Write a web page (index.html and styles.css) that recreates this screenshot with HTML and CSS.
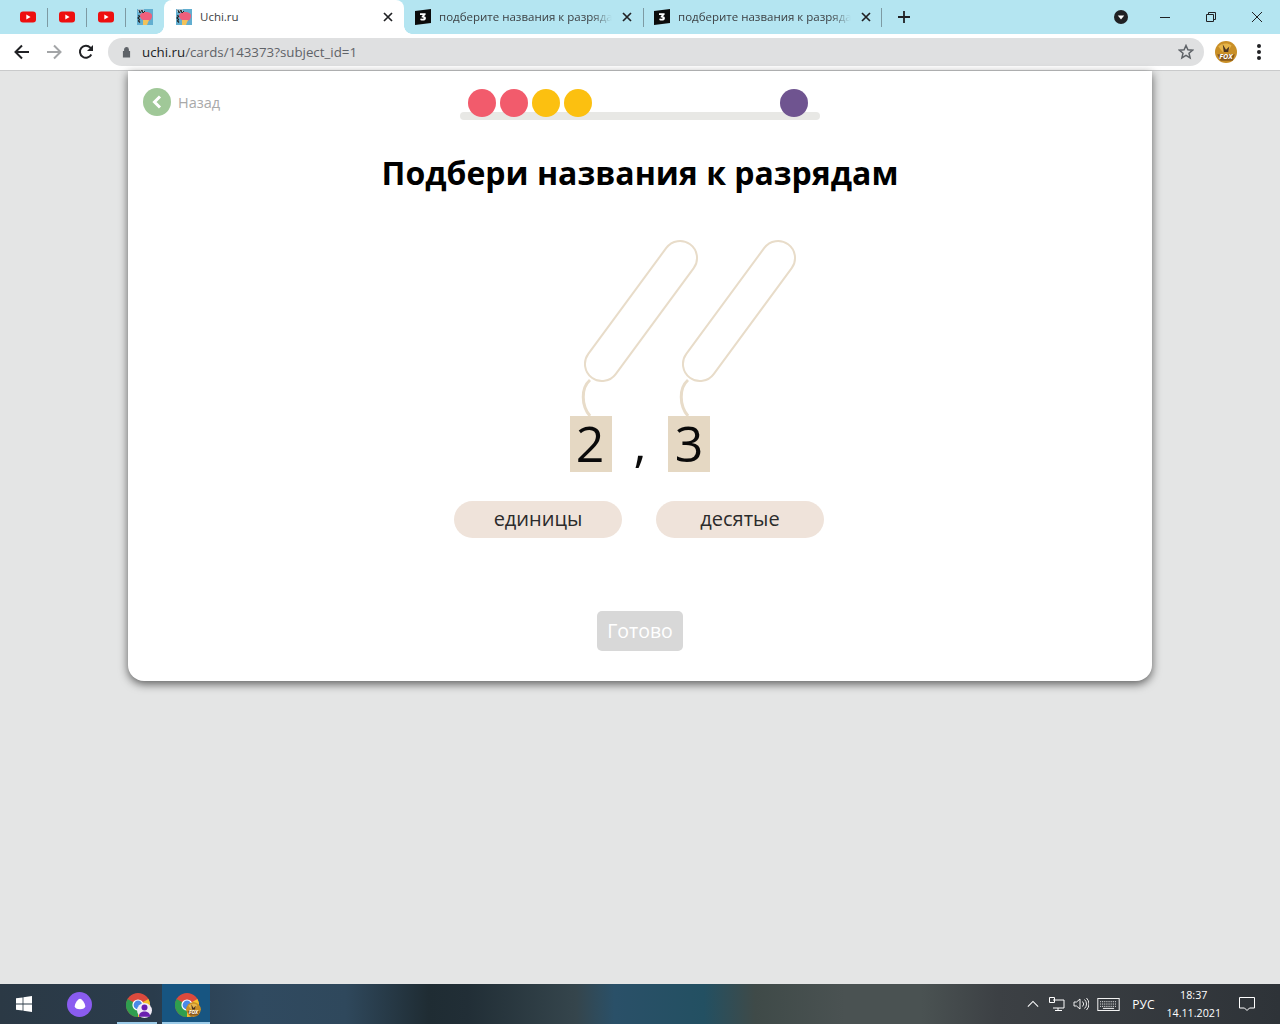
FILE: index.html
```html
<!DOCTYPE html>
<html lang="ru">
<head>
<meta charset="utf-8">
<title>Uchi.ru</title>
<link rel="stylesheet" href="styles.css">
</head>
<body>
<svg class="defs" width="0" height="0" aria-hidden="true">
  <defs>
    <symbol id="yt" viewBox="0 0 16 12"><rect width="16" height="11" y="0.5" rx="3" fill="#ee0f0f"/><path d="M6.3 3.6v4.8L10.6 6z" fill="#fff"/></symbol>
    <symbol id="uchi" viewBox="0 0 16 16"><rect width="16" height="16" fill="#62aed0"/><path d="M1 0h6v3H1z" fill="#a9c7d6"/><path d="M3 7c0-3 3-4 6-4s6 1 6 4c0 3-2 5-5 5S3 10 3 7z" fill="#ef5f7c"/><path d="M6 11h6l-2 5H6z" fill="#f3c25a"/><path d="M2 1l1 3 2-3 1 3 2-2" fill="none" stroke="#222" stroke-width="1"/><path d="M1.500 6l1 1.500-1.500 1.500 1.500 1.500-1 1.500 1.500 1.500" fill="none" stroke="#222" stroke-width="1.200"/></symbol>
    <symbol id="znanija" viewBox="0 0 16 16"><path d="M0 2l16-2v14L0 16z" fill="#0b0b0b"/><path d="M5 4.2h5.6v1.6L8.9 7.2c1.3.1 2 .9 2 2 0 1.500-1.200 2.400-2.900 2.400-1 0-2-.2-2.800-.7l.6-1.700c.6.400 1.300.6 1.900.6.600 0 1-.2 1-.7 0-.5-.4-.7-1.100-.7H6.700V7.100L8 5.900H5z" fill="#fff"/></symbol>
    <symbol id="close" viewBox="0 0 10 10"><path d="M1 1l8 8M9 1l-8 8" fill="none" stroke="#202124" stroke-width="1.700"/></symbol>
    <symbol id="chrome" viewBox="0 0 24 24"><circle cx="12" cy="12" r="12" fill="#dc4a3d"/><path d="M12 12L1.600 6A12 12 0 0 0 12 24z" fill="#2f9e4f"/><path d="M12 12v12A12 12 0 0 0 22.400 6z" fill="#f5c22c"/><circle cx="12" cy="12" r="5.600" fill="#fff"/><circle cx="12" cy="12" r="4.400" fill="#4a89e8"/></symbol>
    <symbol id="fox" viewBox="0 0 20 20"><circle cx="10" cy="10" r="10" fill="#c98f26"/><path d="M3 5c3-3 8-4 12-1l-3 5-5 1z" fill="#e6b54a"/><path d="M7 3l3 5 3-3-1 5H8z" fill="#4a3320"/><path d="M2 12h16l-2 6H5z" fill="#8a5a1c"/><text x="10" y="16.500" text-anchor="middle" font-family="Open Sans" font-size="6.500" font-weight="700" font-style="italic" fill="#fff">FOX</text></symbol>
  </defs>
</svg>

<header class="tabstrip">
  <div class="pinned">
    <div class="pin"><svg class="fav-yt"><use href="#yt"/></svg></div>
    <div class="pin"><svg class="fav-yt"><use href="#yt"/></svg></div>
    <div class="pin"><svg class="fav-yt"><use href="#yt"/></svg></div>
    <div class="pin pin-last"><svg class="fav"><use href="#uchi"/></svg></div>
  </div>
  <div class="tab tab-active">
    <svg class="fav"><use href="#uchi"/></svg>
    <span class="tab-title">Uchi.ru</span>
    <svg class="tab-x"><use href="#close"/></svg>
  </div>
  <div class="tab tab-rest">
    <svg class="fav"><use href="#znanija"/></svg>
    <span class="tab-title tab-fade">подберите названия к разрядам</span>
    <svg class="tab-x"><use href="#close"/></svg>
  </div>
  <div class="tab tab-rest tab-sep">
    <svg class="fav"><use href="#znanija"/></svg>
    <span class="tab-title tab-fade">подберите названия к разрядам</span>
    <svg class="tab-x"><use href="#close"/></svg>
  </div>
  <span class="strip-sep"></span>
  <svg class="new-tab" viewBox="0 0 12 12"><path d="M6 0v12M0 6h12" fill="none" stroke="#202124" stroke-width="1.800"/></svg>
  <div class="strip-right">
    <span class="tab-search"><svg viewBox="0 0 14 14"><circle cx="7" cy="7" r="7" fill="#202124"/><path d="M3.800 5.600h6.400L7 9.600z" fill="#fff"/></svg></span>
    <svg class="win-btn" viewBox="0 0 46 20"><path d="M18 10.500h10" stroke="#202124" fill="none"/></svg>
    <svg class="win-btn" viewBox="0 0 46 20"><path d="M18.500 7.500h7v7h-7zM20.500 7.500v-2h7v7h-2" stroke="#202124" fill="none"/></svg>
    <svg class="win-btn" viewBox="0 0 46 20"><path d="M18 5l10 10M28 5L18 15" stroke="#202124" fill="none"/></svg>
  </div>
</header>

<nav class="toolbar">
  <svg class="nav-icon" viewBox="0 0 16 16"><path d="M15 8H2M8 1.500L1.500 8 8 14.500" fill="none" stroke="#202124" stroke-width="2"/></svg>
  <svg class="nav-icon" viewBox="0 0 16 16"><path d="M1 8h13M8 1.500L14.500 8 8 14.500" fill="none" stroke="#a3a5a7" stroke-width="2"/></svg>
  <svg class="nav-icon" viewBox="0 0 16 16"><path d="M13.300 10.500A6 6 0 1 1 12.300 3.600L14 5.200" fill="none" stroke="#202124" stroke-width="2"/><path d="M15 1v6H9z" fill="#202124"/></svg>
  <div class="omnibox">
    <svg class="lock" viewBox="0 0 10 12"><path d="M1 5h8v7H1zM3 5V3.200a2 2 0 0 1 4 0V5" fill="#5f6368"/><path d="M3 5V3.200a2 2 0 0 1 4 0V5" fill="none" stroke="#5f6368" stroke-width="1.300"/></svg>
    <span class="url"><span class="url-host">uchi.ru</span>/cards/143373?subject_id=1</span>
    <svg class="star" viewBox="0 0 16 16"><path d="M8 1.500l1.900 4.300 4.600.4-3.500 3 1.100 4.600L8 11.300l-4.100 2.500L5 9.200l-3.500-3 4.600-.4z" fill="none" stroke="#5f6368" stroke-width="1.500"/></svg>
  </div>
  <svg class="avatar"><use href="#fox"/></svg>
  <span class="menu-dots"><i></i><i></i><i></i></span>
</nav>

<main class="page">
  <section class="card">
    <div class="top-row">
      <a class="back"><span class="back-circle"><svg viewBox="0 0 12 16"><path d="M9 2.500L3.500 8 9 13.500" fill="none" stroke="#fff" stroke-width="3"/></svg></span>Назад</a>
      <div class="progress">
        <span class="dot dot-red"></span>
        <span class="dot dot-red"></span>
        <span class="dot dot-yellow"></span>
        <span class="dot dot-yellow"></span>
        <span class="dot dot-purple"></span>
      </div>
    </div>
    <h1 class="title">Подбери названия к разрядам</h1>
    <svg class="slots" viewBox="0 0 220 180" fill="#fff" stroke="#e8dcc9" stroke-width="2">
      <path d="M10 142C1 150 1 167 10 178" fill="none" stroke-width="3"/>
      <path d="M108 142C99 150 99 167 108 178" fill="none" stroke-width="3"/>
      <path d="M86.300 9.900A17 17 0 0 1 113.700 30.100L35.700 136.100A17 17 0 0 1 8.300 115.900Z"/>
      <path d="M184.300 9.900A17 17 0 0 1 211.700 30.100L133.700 136.100A17 17 0 0 1 106.300 115.900Z"/>
    </svg>
    <div class="number">
      <span class="digit">2</span>
      <span class="comma">,</span>
      <span class="digit">3</span>
    </div>
    <div class="choices">
      <span class="choice">единицы</span>
      <span class="choice">десятые</span>
    </div>
    <button class="done">Готово</button>
  </section>
</main>

<footer class="taskbar">
  <svg class="win-logo" viewBox="0 0 16 16"><path d="M0 2.300l6.600-.9v6.200H0zM7.400 1.300L16 0v7.600H7.400zM0 8.400h6.600v6.200L0 13.700zM7.400 8.400H16V16l-8.600-1.300z" fill="#fff"/></svg>
  <span class="alice"><svg viewBox="0 0 12 12"><path d="M6 1.500c1.800 0 4.500 4.200 4.500 6.500 0 1.700-2 2.500-4.500 2.500S1.500 9.700 1.500 8C1.500 5.700 4.200 1.500 6 1.500z" fill="#fff"/></svg></span>
  <div class="task task-open">
    <svg class="chrome"><use href="#chrome"/></svg>
    <span class="badge badge-user"><svg viewBox="0 0 12 12"><circle cx="6" cy="3.600" r="2.400" fill="#6a1fb0"/><path d="M1.500 11c0-3 2-4.200 4.500-4.200s4.500 1.200 4.500 4.200z" fill="#6a1fb0"/></svg></span>
  </div>
  <div class="task task-active">
    <svg class="chrome"><use href="#chrome"/></svg>
    <svg class="badge"><use href="#fox"/></svg>
  </div>
  <div class="tray">
    <svg class="tray-icon" viewBox="0 0 14 14"><path d="M1 10l6-6 6 6" fill="none" stroke="#fff" stroke-width="1.200"/></svg>
    <svg class="tray-icon tray-net" viewBox="0 0 16 14"><path d="M4 3h11v8H4M9 11v2M6 13.500h7M.5.500h5v5h-5z" fill="none" stroke="#fff"/></svg>
    <svg class="tray-icon tray-net" viewBox="0 0 16 14"><path d="M1 5h2.500L7 2v10L3.500 9H1zM9.500 4.500a3.500 3.500 0 0 1 0 5M11.500 2.500a6 6 0 0 1 0 9M13.500 1a8.500 8.500 0 0 1 0 12" fill="none" stroke="#fff" stroke-width=".9"/></svg>
    <svg class="tray-kbd" viewBox="0 0 24 14"><rect x=".5" y=".5" width="23" height="13" fill="none" stroke="#fff"/><path d="M3 4h18M3 6.500h18M3 9h18" stroke="#fff" stroke-dasharray="1 1" fill="none"/><path d="M6 11.200h12" stroke="#fff" fill="none"/></svg>
    <span class="lang">РУС</span>
    <span class="clock"><span>18:37</span><span>14.11.2021</span></span>
    <svg class="notify" viewBox="0 0 16 16"><path d="M.5 1.500h15v10.500h-5L8 14.500 5.500 12h-5z" fill="none" stroke="#fff"/></svg>
  </div>
</footer>
</body>
</html>
```

FILE: styles.css
```css
* { box-sizing: border-box; }
html, body { margin: 0; height: 100%; }
body {
  width: 1280px;
  height: 1024px;
  display: flex;
  flex-direction: column;
  overflow: hidden;
  font-family: "Open Sans", "Liberation Sans", sans-serif;
  background: #e4e5e5;
}
.defs { position: absolute; }

/* Tab strip */
.tabstrip {
  height: 34px;
  flex: none;
  display: flex;
  align-items: center;
  background: #b4e5f1;
  padding-left: 8px;
}
.pinned { display: flex; align-items: center; height: 100%; }
.pin {
  width: 39px;
  height: 100%;
  display: flex;
  align-items: center;
  justify-content: center;
  position: relative;
}
.pin::after, .tab-sep::before, .strip-sep::before {
  content: "";
  position: absolute;
  top: 8px;
  height: 19px;
  width: 1px;
  background: #7d9aa3;
}
.pin::after { right: -1px; }
.pin-last::after { display: none; }
.fav-yt { width: 16px; height: 12px; }
.fav { width: 16px; height: 16px; flex: none; }
.tab {
  position: relative;
  height: 100%;
  display: flex;
  align-items: center;
  padding: 0 11px 0 12px;
  font-size: 11.5px;
  color: #3c4043;
}
.tab-active {
  width: 240px;
  background: #fff;
  border-radius: 8px 8px 0 0;
}
.tab-active::before, .tab-active::after {
  content: "";
  position: absolute;
  bottom: 0;
  width: 8px;
  height: 8px;
}
.tab-active::before { left: -8px; background: radial-gradient(circle at 0 0, transparent 7.5px, #fff 8px); }
.tab-active::after { right: -8px; background: radial-gradient(circle at 100% 0, transparent 7.5px, #fff 8px); }
.tab-rest { width: 239px; padding-left: 11px; }
.tab-sep::before { left: 0; }
.strip-sep { position: relative; align-self: stretch; width: 1px; margin-left: -1px; }
.strip-sep::before { left: 0; }
.tab-title {
  flex: 1;
  margin-left: 8px;
  padding-bottom: 2px;
  white-space: nowrap;
  overflow: hidden;
  min-width: 0;
}
.tab-fade {
  -webkit-mask-image: linear-gradient(90deg, #000 88%, transparent 100%);
  mask-image: linear-gradient(90deg, #000 88%, transparent 100%);
}
.tab-x { width: 10px; height: 10px; margin-left: 10px; flex: none; }
.new-tab { width: 12px; height: 12px; margin-left: 16px; }
.strip-right { margin-left: auto; display: flex; align-items: center; }
.tab-search { width: 14px; height: 14px; display: flex; margin-right: 14px; }
.tab-search svg { width: 14px; height: 14px; }
.win-btn { width: 46px; height: 20px; }

/* Toolbar */
.toolbar {
  height: 37px;
  flex: none;
  background: #fff;
  border-bottom: 1px solid #c9cacb;
  display: flex;
  align-items: center;
  padding-left: 14px;
}
.nav-icon { width: 16px; height: 16px; margin-right: 16px; flex: none; }
.omnibox {
  width: 1096px;
  margin-left: -2px;
  height: 28px;
  border-radius: 14px;
  background: #dfe0e1;
  display: flex;
  align-items: center;
  padding: 0 10px 0 14px;
}
.lock { width: 9px; height: 12px; flex: none; }
.url { font-size: 13.3px; color: #5f6368; margin-left: 11px; }
.url-host { color: #202124; }
.star { width: 16px; height: 16px; margin-left: auto; }
.avatar { width: 22px; height: 22px; margin-left: 11px; flex: none; }
.menu-dots { display: flex; flex-direction: column; gap: 2px; margin-left: 20px; flex: none; }
.menu-dots i { display: block; width: 4px; height: 4px; border-radius: 50%; background: #202124; }

/* Page */
.page {
  flex: 1;
  min-height: 0;
  display: flex;
  justify-content: center;
  align-items: flex-start;
  background: #e4e5e5;
}
.card {
  width: 1024px;
  height: 610px;
  background: #fff;
  border-radius: 0 0 16px 16px;
  box-shadow: 0 3px 10px rgba(0, 0, 0, .6);
  display: flex;
  flex-direction: column;
  align-items: center;
  padding-top: 17px;
  position: relative;
}
.top-row {
  width: 100%;
  height: 29px;
  display: grid;
  grid-template-columns: 1fr 360px 1fr;
  padding-left: 15px;
  position: relative;
}
.back {
  display: flex;
  align-items: center;
  gap: 7px;
  font-size: 14.5px;
  color: #a9a9a9;
  height: 28px;
  position: absolute;
  left: 15px;
  top: 0;
}
.back-circle {
  width: 28px;
  height: 28px;
  border-radius: 50%;
  background: #a0c898;
  display: flex;
  align-items: center;
  justify-content: center;
}
.back-circle svg { width: 12px; height: 16px; }
.progress {
  grid-column: 2;
  position: relative;
  height: 32px;
  width: 360px;
  margin-left: -8px;
  display: flex;
  align-items: flex-start;
  gap: 4px;
  padding: 1px 0 0 8px;
}
.progress::before {
  content: "";
  position: absolute;
  left: 0;
  right: 0;
  top: 24px;
  height: 8px;
  border-radius: 4px;
  background: #e8e8e5;
}
.dot {
  width: 28px;
  height: 28px;
  border-radius: 50%;
  position: relative;
  flex: none;
}
.dot-red { background: #f25b6c; }
.dot-yellow { background: #fcc010; }
.dot-purple { background: #6f5490; margin-left: 184px; }
.title {
  margin: 34px 0 0;
  font-size: 32px;
  line-height: 44px;
  font-weight: 700;
  color: #000;
}
.slots {
  width: 220px;
  height: 180px;
  margin: 43px 0 0 100px;
  flex: none;
  overflow: visible;
}
.number {
  display: flex;
  align-items: stretch;
  height: 56px;
  margin-top: -2px;
  font-size: 50px;
  color: #0a0a0a;
  line-height: 54px;
}
.digit {
  width: 42px;
  text-align: center;
  background: #e5d8c3;
}
.digit:first-child { padding-right: 2px; }
.comma { width: 56px; text-align: center; }
.choices { display: flex; gap: 34px; margin-top: 29px; margin-left: -2px; }
.choice {
  width: 168px;
  height: 37px;
  border-radius: 19px;
  background: #efe3da;
  font-size: 20px;
  line-height: 35px;
  text-align: center;
  color: #2b2b2b;
}
.done {
  margin-top: 73px;
  width: 86px;
  height: 40px;
  border: 0;
  border-radius: 5px;
  background: #d8d8d8;
  color: #fff;
  font: 19.5px "Open Sans", "Liberation Sans", sans-serif;
  padding: 0 0 2px;
}

/* Taskbar */
.taskbar {
  height: 40px;
  flex: none;
  display: flex;
  align-items: center;
  color: #fff;
  background: linear-gradient(90deg, #2b3945 0%, #2a3c4c 12%, #304a60 20%, #2f485c 27%, #1f2c33 33.5%, #212e36 36.5%, #35454c 45%, #2a5068 48%, #235062 55%, #3f4a48 59%, #4a5252 66%, #4a5252 72%, #3c4044 78%, #2e3338 100%);
}
.win-logo { width: 16px; height: 16px; margin-left: 16px; flex: none; }
.alice {
  width: 25px;
  height: 25px;
  margin-left: 35px;
  border-radius: 50%;
  background: #8a5cf0;
  display: flex;
  align-items: center;
  justify-content: center;
  flex: none;
}
.alice svg { width: 14px; height: 14px; }
.task {
  position: relative;
  width: 40px;
  height: 100%;
  margin-left: 25px;
  flex: none;
}
.task::after {
  content: "";
  position: absolute;
  left: 0;
  right: 0;
  bottom: 0;
  height: 2px;
  background: #9ccbe8;
}
.task-active { width: 48px; margin-left: 5px; background: #175581; }
.chrome { width: 24px; height: 24px; position: absolute; left: 9px; top: 9px; }
.task-active .chrome { left: 13px; }
.badge {
  position: absolute;
  width: 15px;
  height: 15px;
  left: 20px;
  top: 19px;
  border-radius: 50%;
  background: #f1ecf6;
  display: flex;
}
.task-active .badge { left: 24px; top: 18px; background: none; }
.badge-user svg { width: 15px; height: 15px; }
.tray { margin-left: auto; display: flex; align-items: center; height: 100%; }
.tray-icon { width: 12px; height: 12px; margin-right: 10px; }
.tray-net { width: 16px; height: 14px; margin-right: 8px; }
.tray-kbd { width: 23px; height: 13px; margin-right: 12px; }
.lang { font-size: 12px; margin-right: 12px; }
.clock {
  display: flex;
  flex-direction: column;
  align-items: center;
  font-size: 10.7px;
  line-height: 18px;
  margin-right: 18px;
}
.notify { width: 16px; height: 16px; margin-right: 25px; }
```
